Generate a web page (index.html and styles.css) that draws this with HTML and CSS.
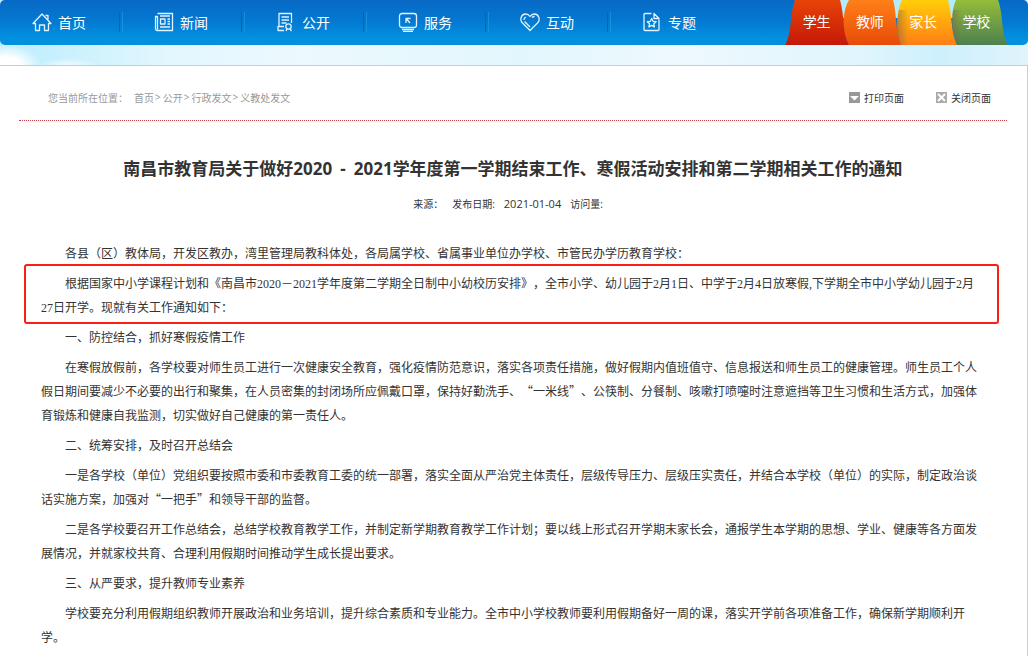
FILE: index.html
```html
<!DOCTYPE html>
<html lang="zh-CN">
<head>
<meta charset="utf-8">
<title>南昌市教育局</title>
<link rel="stylesheet" href="styles.css">
</head>
<body>
<header class="header">
  <nav class="nav">
    <ul class="menu">
      <li><a href="#"><svg class="icon" viewBox="0 0 20 20"><path d="M1 11.500 10 2l9 9.500h-2.500V18.500h-4V13h-5v5.500h-4V11.500zM13.500 3.500h2.500v4"/></svg>首页</a></li>
      <li><a href="#"><svg class="icon" viewBox="0 0 20 20"><path d="M3.500 1.500h15v17H3A2 2 0 0 1 1.500 17V4.500h2v13M6 4h10M6.500 7h4.500v5H6.500zM13.500 7h2.500M13.500 9.500h2.500M13.500 12h2.500M6 15h10"/></svg>新闻</a></li>
      <li><a href="#"><svg class="icon" viewBox="0 0 20 20"><path d="M8 18.500H2v-4h6M3 14.500V1.500h12.500V11M5.500 5h7.500M5.500 8h7.500M5.500 11h5"/><circle cx="12.500" cy="14.500" r="2.700"/><path d="m11 17-1 2M14 17l1.500 2"/></svg>公开</a></li>
      <li><a href="#"><svg class="icon" viewBox="0 0 20 20"><rect x="1.500" y="1.500" width="17" height="14" rx="2.500"/><path d="M4 17.500h12M5 19.300h10M8 11V6.500h4.500M8.500 7l3.500 4"/></svg>服务</a></li>
      <li><a href="#"><svg class="icon" viewBox="0 0 20 20"><path d="M10 18.500 2 10.500C-.5 7 1.500 2 5.500 2c2 0 3.500 1 4.500 2.500C11 3 12.500 2 14.500 2c4 0 6 5 3.500 8.500zM4 8c0-1.500.7-2.500 2-3M4.500 9.500l5.500 5.500M12 5.500c.7-.7 1.500-1 2.500-1"/></svg>互动</a></li>
      <li><a href="#"><svg class="icon" viewBox="0 0 20 20"><path d="M9.500 1.500H3a1 1 0 0 0-1 1v15a1 1 0 0 0 1 1h13a1 1 0 0 0 1-1V7.500M12 1.500v5h5zM9.700 6.500l1.300 2.800 3.100.4-2.300 2.100.6 3.100-2.700-1.500-2.800 1.500.6-3.100-2.200-2.100 3-.4z"/></svg>专题</a></li>
    </ul>
    <div class="roles">
      <svg class="tabs" viewBox="0 0 223 45" preserveAspectRatio="none" aria-hidden="true">
        <defs>
          <linearGradient id="red" x2="0" y2="1"><stop stop-color="#e84407"/><stop offset="1" stop-color="#c41808"/></linearGradient>
          <linearGradient id="orange" x2="0" y2="1"><stop stop-color="#ff8018"/><stop offset="1" stop-color="#e84b08"/></linearGradient>
          <linearGradient id="yellow" x2="0" y2="1"><stop stop-color="#ffce08"/><stop offset="1" stop-color="#ff7e16"/></linearGradient>
          <linearGradient id="green" x2="0" y2="1"><stop stop-color="#94bd38"/><stop offset="1" stop-color="#4e8050"/></linearGradient>
          <linearGradient id="shade"><stop stop-color="#806040" stop-opacity=".5"/><stop offset="1" stop-color="#806040" stop-opacity="0"/></linearGradient>
        </defs>
        <path fill="#b4ebfc" d="M54 0h120l-4 18H56z"/>
        <path fill="url(#red)" d="M10 0h45c4 12 3 34 9 45H0C7 34 5 12 10 0z"/>
        <path fill="url(#orange)" d="M64 0h44c4 12 2 34 9 45H64C56 28 58 10 64 0z"/>
        <path fill="url(#yellow)" d="M117 0h46c4 12 3 34 9 45h-56c-6-17-4-35 1-45z"/>
        <path fill="url(#shade)" d="M114 10h9v35h-7c-4-11-5-23-2-35z"/>
        <path fill="url(#green)" d="M171 0h42c5 12 3 34 10 45h-51c-6-17-6-35-1-45z"/>
        <path fill="url(#shade)" d="M168 10h9v35h-5c-5-11-6-23-4-35z"/>
      </svg>
      <a href="#">学生</a><a href="#">教师</a><a href="#">家长</a><a href="#">学校</a>
    </div>
  </nav>
</header>
<main class="page">
  <div class="toolbar">
    <div class="crumbs"><span class="place">您当前所在位置：</span><a href="#">首页</a><i>&gt;</i><a href="#">公开</a><i>&gt;</i><a href="#">行政发文</a><i>&gt;</i><a href="#">义教处发文</a></div>
    <div class="actions">
      <button type="button"><svg viewBox="0 0 11 11"><path fill="#999" d="M0 0h11v11H0z"/><path fill="#fff" d="M1 4h9L5.500 8.500z"/></svg>打印页面</button>
      <button type="button"><svg viewBox="0 0 11 11"><path fill="#aaa" d="M0 0h11v11H0z"/><path stroke="#fff" stroke-width="2" d="m2 2 7 7M9 2 2 9"/></svg>关闭页面</button>
    </div>
  </div>
  <article>
    <h1>南昌市教育局关于做好<span class="years">2020<span class="dash">-</span>2021</span>学年度第一学期结束工作、寒假活动安排和第二学期相关工作的通知</h1>
    <div class="meta"><span>来源：</span><span>发布日期:</span><time>2021-01-04</time><span>访问量:</span></div>
    <div class="content">
      <p>各县（区）教体局，开发区教办，湾里管理局教科体处，各局属学校、省属事业单位办学校、市管民办学历教育学校：</p>
      <p class="marked">根据国家中小学课程计划和《南昌市2020－2021学年度第二学期全日制中小幼校历安排》，全市小学、幼儿园于2月1日、中学于2月4日放寒假,下学期全市中小学幼儿园于2月27日开学。现就有关工作通知如下：</p>
      <p>一、防控结合，抓好寒假疫情工作</p>
      <p>在寒假放假前，各学校要对师生员工进行一次健康安全教育，强化疫情防范意识，落实各项责任措施，做好假期内值班值守、信息报送和师生员工的健康管理。师生员工个人假日期间要减少不必要的出行和聚集，在人员密集的封闭场所应佩戴口罩，保持好勤洗手、<span class="quote">“一米线”</span>、公筷制、分餐制、咳嗽打喷嚏时注意遮挡等卫生习惯和生活方式，加强体育锻炼和健康自我监测，切实做好自己健康的第一责任人。</p>
      <p>二、统筹安排，及时召开总结会</p>
      <p>一是各学校（单位）党组织要按照市委和市委教育工委的统一部署，落实全面从严治党主体责任，层级传导压力、层级压实责任，并结合本学校（单位）的实际，制定政治谈话实施方案，加强对<span class="quote">“一把手”</span>和领导干部的监督。</p>
      <p>二是各学校要召开工作总结会，总结学校教育教学工作，并制定新学期教育教学工作计划；要以线上形式召开学期末家长会，通报学生本学期的思想、学业、健康等各方面发展情况，并就家校共育、合理利用假期时间推动学生成长提出要求。</p>
      <p>三、从严要求，提升教师专业素养</p>
      <p>学校要充分利用假期组织教师开展政治和业务培训，提升综合素质和专业能力。全市中小学校教师要利用假期备好一周的课，落实开学前各项准备工作，确保新学期顺利开学。</p>
    </div>
  </article>
</main>
</body>
</html>
```
FILE: styles.css
```css
* { box-sizing: border-box; }
body {
  margin: 0;
  font-family: "Open Sans", "Noto Sans CJK SC", sans-serif;
  color: #333;
  background: #fff;
}
a { color: inherit; text-decoration: none; }
.header {
  height: 65px;
  background:
    radial-gradient(ellipse 36px 22px at 6px 66px, #fff 40%, transparent),
    radial-gradient(ellipse 30px 8px at 68px 66px, #f4fcff, transparent),
    linear-gradient(90deg, #bdedfd 0, #c8f0fd 60px, #e3f7fe 170px, #ecf9fe 300px, #e2f7fd 520px, #eef9fd 680px, #e0f5fd 860px, #cdf0fd 940px, #e0f4fc 100%);
}
.nav {
  display: flex;
  justify-content: space-between;
  height: 45px;
  padding-right: 20px;
  border-radius: 5px;
  background: linear-gradient(#0869c5, #0478d0 45%, #0290df 85%);
  color: #fff;
  font-size: 14px;
}
.menu { display: flex; margin: 0; padding: 0; list-style: none; }
.menu li { position: relative; width: 122px; }
.menu li + li::before {
  content: "";
  position: absolute;
  left: -3px;
  top: 12px;
  width: 2px;
  height: 20px;
  border-left: 1px solid #0765b4;
  border-right: 1px solid #1a8ddb;
}
.menu a {
  display: flex;
  align-items: center;
  gap: 6px;
  height: 43px;
  padding-left: 32px;
}
.icon {
  width: 20px;
  height: 20px;
  fill: none;
  stroke: #e2f3ff;
  stroke-width: 1.3;
  stroke-linejoin: round;
}
.roles { position: relative; display: flex; width: 223px; height: 45px; padding: 0 5px; }
.roles a { position: relative; flex: 1; line-height: 44px; text-align: center; }
.tabs { position: absolute; inset: 0; width: 100%; height: 100%; }
.page {
  min-height: calc(100vh - 65px);
  padding: 0 20px 0 19px;
  border-top: 1px solid #ccc;
  border-right: 1px solid #ccc;
}
.toolbar {
  display: flex;
  align-items: center;
  justify-content: space-between;
  height: 55px;
  padding: 8px 16px 0 29px;
  border-bottom: 1px dotted #c54048;
  font-size: 10px;
}
.crumbs { display: flex; color: #999; }
.crumbs i { font-style: normal; padding: 0 1px; }
.place { margin-right: 6px; }
.crumbs i { padding: 0 2px 0 1px; }
.actions { display: flex; gap: 32px; }
.actions button {
  display: flex;
  align-items: center;
  gap: 4px;
  padding: 0;
  border: 0;
  background: none;
  color: #333;
  font: inherit;
}
.actions svg { width: 11px; height: 11px; }
h1 {
  margin: 34px 0 0;
  font-size: 17px;
  line-height: 28px;
  text-align: center;
}
.dash { margin: 0 8px; }
.meta {
  display: flex;
  justify-content: center;
  gap: 9px;
  margin-top: 13px;
  padding-right: 10px;
  font-size: 10px;
  line-height: 16px;
}
.meta time { font-size: 11px; }
.content {
  margin: 30px 26px 0 22px;
  font-family: "Liberation Serif", "Noto Sans CJK SC", serif;
  font-size: 12px;
  line-height: 24px;
  text-spacing-trim: space-all;
}
.content p { margin: 0 0 6px; text-indent: 24px; }
.quote { font-family: "Noto Sans CJK SC", sans-serif; line-height: 1; }
.marked { position: relative; }
.marked::before {
  content: "";
  position: absolute;
  inset: -8px -18px -4px -17px;
  border: 2px solid #fb1e14;
  border-radius: 3px;
}
```
